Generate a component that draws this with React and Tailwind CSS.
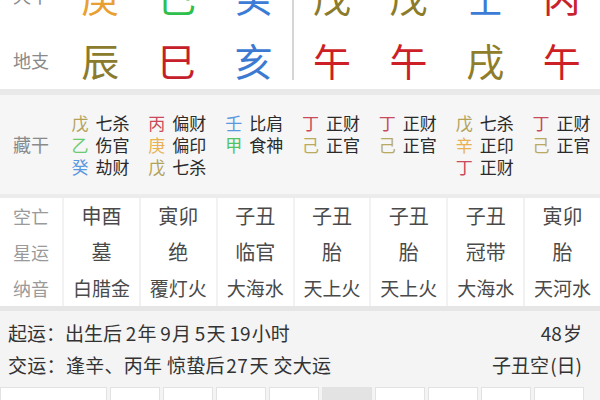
import React from "react";

const font = { fontFamily: '"Noto Sans CJK SC", "Noto Sans", sans-serif' };

const gan = [
  { c: "庚", color: "text-[#e9a032]" },
  { c: "己", color: "text-[#2fbf4c]" },
  { c: "癸", color: "text-[#3c7cd6]" },
  { c: "戊", color: "text-[#8b7b2a]" },
  { c: "戊", color: "text-[#8b7b2a]" },
  { c: "壬", color: "text-[#3c7cd6]" },
  { c: "丙", color: "text-[#c8232c]" },
];

const zhi = [
  { c: "辰", color: "text-[#8b7b2e]" },
  { c: "巳", color: "text-[#c5202a]" },
  { c: "亥", color: "text-[#3c7ad2]" },
  { c: "午", color: "text-[#cc1f26]" },
  { c: "午", color: "text-[#cc1f26]" },
  { c: "戌", color: "text-[#8f7d2a]" },
  { c: "午", color: "text-[#cc1f26]" },
];

const C = {
  wu: "text-[#b3a259]",
  yi: "text-[#6ccb72]",
  gui: "text-[#5a98df]",
  bing: "text-[#c94b5b]",
  geng: "text-[#e8b253]",
  ren: "text-[#5a98df]",
  jia: "text-[#52c263]",
  ding: "text-[#c94b5b]",
  ji: "text-[#b9aa62]",
  xin: "text-[#e8b253]",
};

const cang = [
  [["戊", C.wu, "七杀"], ["乙", C.yi, "伤官"], ["癸", C.gui, "劫财"]],
  [["丙", C.bing, "偏财"], ["庚", C.geng, "偏印"], ["戊", C.wu, "七杀"]],
  [["壬", C.ren, "比肩"], ["甲", C.jia, "食神"]],
  [["丁", C.ding, "正财"], ["己", C.ji, "正官"]],
  [["丁", C.ding, "正财"], ["己", C.ji, "正官"]],
  [["戊", C.wu, "七杀"], ["辛", C.xin, "正印"], ["丁", C.ding, "正财"]],
  [["丁", C.ding, "正财"], ["己", C.ji, "正官"]],
];

const info = [
  ["申酉", "墓", "白腊金"],
  ["寅卯", "绝", "覆灯火"],
  ["子丑", "临官", "大海水"],
  ["子丑", "胎", "天上火"],
  ["子丑", "胎", "天上火"],
  ["子丑", "冠带", "大海水"],
  ["寅卯", "胎", "天河水"],
];

// small spaces, like the auto-spacing between digits and hanzi on iOS
const hs = "\u200a";
const ts = "\u2009";

function PillarCol({ g, z, divider }) {
  return (
    <div className={`flex-1 flex flex-col items-center ${divider ? "border-r-2 border-[#d6d6d6]" : ""}`}>
      <div className={`h-[65px] flex items-center text-[38px] ${g.color}`}>{g.c}</div>
      <div className={`h-[52px] leading-[64px] text-[38px] ${z.color}`}>{z.c}</div>
    </div>
  );
}

export default function App() {
  return (
    <div className="w-[600px] h-[400px] overflow-hidden bg-[#f4f4f4]" style={font}>
      {/* 天干 / 地支 */}
      <div className="h-[89px] overflow-hidden bg-white">
        <div className="flex mt-[-37px]">
          <div className="w-[62px] flex flex-col items-center text-[18px] text-[#8a8a8a]">
            <div className="h-[65px] flex items-center">天干</div>
            <div className="h-[52px] leading-[64px]">地支</div>
          </div>
          <div className="flex-1 flex">
            {gan.map((g, i) => (
              <PillarCol key={i} g={g} z={zhi[i]} divider={i === 2} />
            ))}
          </div>
        </div>
      </div>
      <div className="h-[6px] bg-[#e9e9e9]" />

      {/* 藏干 */}
      <div className="h-[99px] flex bg-[#f6f6f6]">
        <div className="w-[62px] flex items-center justify-center text-[18px] text-[#8a8a8a]">藏干</div>
        <div className="flex-1 flex">
          {cang.map((col, i) => (
            <div key={i} className="flex-1 flex justify-center pt-[17px]">
              <div className="flex flex-col">
                {col.map(([s, color, god], j) => (
                  <div key={j} className="flex gap-[7px] h-[22px] items-center text-[17px]">
                    <span className={color}>{s}</span>
                    <span className="text-[#2a2a2a]">{god}</span>
                  </div>
                ))}
              </div>
            </div>
          ))}
        </div>
      </div>
      <div className="h-[4px] bg-[#ececec]" />

      {/* 空亡 / 星运 / 纳音 */}
      <div className="flex bg-white">
        <div className="w-[62px] flex flex-col text-[18px] text-[#9a9a9a]">
          <div className="h-[36px] flex items-center justify-center">空亡</div>
          <div className="h-[36px] flex items-center justify-center">星运</div>
          <div className="h-[36px] flex items-center justify-center">纳音</div>
        </div>
        <div className="flex-1 flex">
          {info.map((col, i) => (
            <div key={i} className="flex-1 flex flex-col border-l-2 border-[#f2f2f2] text-[#4a4a4a]">
              <div className="h-[36px] flex items-center justify-center text-[20px]">{col[0]}</div>
              <div className="h-[36px] flex items-center justify-center text-[20px]">{col[1]}</div>
              <div className="h-[36px] flex items-center justify-center text-[19px]">{col[2]}</div>
            </div>
          ))}
        </div>
      </div>
      <div className="h-[5px] bg-[#e6e6e6]" />

      {/* 起运 / 交运 */}
      <div className="h-[76px] flex flex-col justify-center pl-[8px] pr-[18px] text-[19px] text-[#333333]">
        <div className="h-[32px] flex items-center justify-between">
          <span>{`起运：出生后${ts}2${hs}年${ts}9${hs}月${ts}5${hs}天${ts}19${hs}小时`}</span>
          <span>{`48${hs}岁`}</span>
        </div>
        <div className="h-[32px] flex items-center justify-between">
          <span className="tracking-[0.3px]">{`交运：逢辛、丙年 惊蛰后${hs}27${hs}天 交大运`}</span>
          <span>{`子丑空${hs}(日)`}</span>
        </div>
      </div>

      {/* 大运 tabs */}
      <div className="flex gap-[3px] h-[30px]">
        <div className="w-[107px] bg-white border border-[#e2e2e2]" />
        {Array.from({ length: 9 }).map((_, i) => (
          <div
            key={i}
            className={`w-[50px] border border-[#e2e2e2] ${i === 4 ? "bg-[#e3e3e3]" : "bg-white"}`}
          />
        ))}
      </div>
    </div>
  );
}
